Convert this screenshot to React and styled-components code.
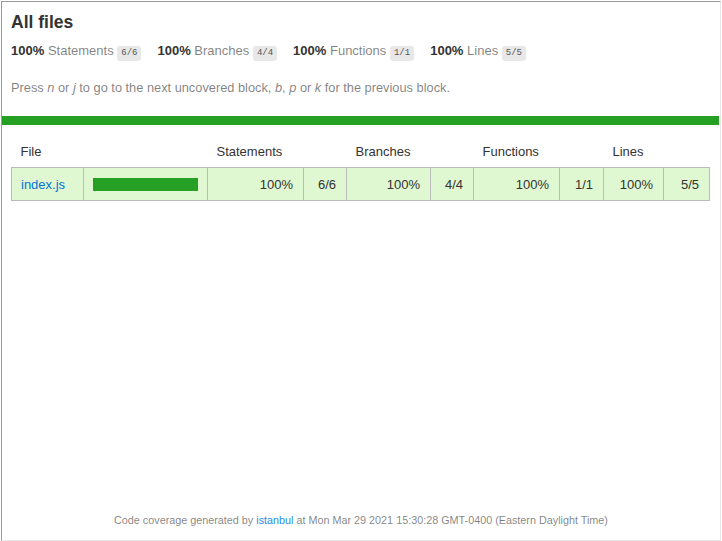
import styled, { createGlobalStyle } from "styled-components";

const GlobalStyle = createGlobalStyle`
  html, body {
    margin: 0;
    padding: 0;
    background: #fff;
  }
  body {
    font-family: "Liberation Sans", Arial, sans-serif;
    font-size: 13px;
    color: #333;
  }
`;

const Frame = styled.div`
  box-sizing: border-box;
  width: 720px;
  height: 540px;
  margin: 1px 0 0 1px;
  border: 1px solid;
  border-color: #9a9a9a #e8e8e8 #e8e8e8 #9a9a9a;
  display: flex;
  flex-direction: column;
`;

const Header = styled.div`
  padding: 10px 10px 20px 9px;
`;

const Title = styled.h1`
  margin: 0;
  font-size: 17.5px;
  line-height: 21px;
  font-weight: bold;
  color: #333;
`;

const Stats = styled.div`
  display: flex;
  gap: 16px;
  margin-top: 10px;
  line-height: 16px;
`;

const Stat = styled.div`
  white-space: nowrap;
`;

const Strong = styled.span`
  font-weight: bold;
  color: #333;
`;

const Quiet = styled.span`
  color: rgba(0, 0, 0, 0.5);
`;

const Fraction = styled.span`
  display: inline-block;
  font-family: "Liberation Mono", "Courier New", monospace;
  font-size: 9px;
  line-height: 11px;
  color: #555;
  background: #e8e8e8;
  padding: 2px 4px;
  border-radius: 3px;
`;

const Hint = styled.p`
  margin: 19px 0 0;
  font-size: 12.8px;
  line-height: 16px;
  color: rgba(0, 0, 0, 0.5);
`;

const StatusLine = styled.div`
  height: 9px;
  margin-right: 1px;
  background: #25a024;
`;

const TableWrap = styled.div`
  padding: 8px 10px 0 9px;
`;

const Table = styled.table`
  width: 698px;
  table-layout: fixed;
  border-collapse: collapse;
  font-size: 13px;
`;

const Th = styled.th`
  text-align: left;
  font-weight: normal;
  white-space: nowrap;
  padding: 12px 9px 8px;
  line-height: 14px;
  color: #333;
`;

const Body = styled.tbody`
  border: 1px solid #bbb;
`;

const Row = styled.tr`
  background: ${(p) => (p.$level === "high" ? "#e0f8d1" : "#fff")};
  border-bottom: 1px solid #bbb;
`;

const Td = styled.td`
  padding: 10px 10px 9px 9px;
  line-height: 13px;
  border-right: 1px solid #bbb;
  text-align: ${(p) => (p.$right ? "right" : "left")};
  white-space: nowrap;
  color: #333;
  &:last-child {
    border-right: none;
  }
`;

const FileLink = styled.a`
  color: #0074d9;
  text-decoration: none;
`;

const Chart = styled.div`
  width: 105px;
  height: 13px;
  line-height: 0;
  background: #25a024;
`;

const Footer = styled.div`
  margin-top: auto;
  padding-bottom: 13px;
  text-align: center;
  font-size: 10.8px;
  line-height: 14px;
  color: rgba(0, 0, 0, 0.5);
`;

const FooterLink = styled.a`
  color: #2b8be6;
  text-decoration: none;
`;

const summary = [
  { label: "Statements", pct: "100%", frac: "6/6" },
  { label: "Branches", pct: "100%", frac: "4/4" },
  { label: "Functions", pct: "100%", frac: "1/1" },
  { label: "Lines", pct: "100%", frac: "5/5" },
];

const colWidths = [72, 124, 96, 43, 84, 43, 86, 44, 60, 46];

export default function App() {
  return (
    <>
      <GlobalStyle />
      <Frame>
        <Header>
          <Title>All files</Title>
          <Stats>
            {summary.map((s) => (
              <Stat key={s.label}>
                <Strong>{s.pct}</Strong> <Quiet>{s.label}</Quiet>{" "}
                <Fraction>{s.frac}</Fraction>
              </Stat>
            ))}
          </Stats>
          <Hint>
            Press <em>n</em> or <em>j</em> to go to the next uncovered block,{" "}
            <em>b</em>, <em>p</em> or <em>k</em> for the previous block.
          </Hint>
        </Header>
        <StatusLine />
        <TableWrap>
          <Table>
            <colgroup>
              {colWidths.map((w, i) => (
                <col key={i} style={{ width: w }} />
              ))}
            </colgroup>
            <thead>
              <tr>
                <Th>File</Th>
                <Th></Th>
                <Th>Statements</Th>
                <Th></Th>
                <Th>Branches</Th>
                <Th></Th>
                <Th>Functions</Th>
                <Th></Th>
                <Th>Lines</Th>
                <Th></Th>
              </tr>
            </thead>
            <Body>
              <Row $level="high">
                <Td>
                  <FileLink href="#">index.js</FileLink>
                </Td>
                <Td>
                  <Chart />
                </Td>
                <Td $right>100%</Td>
                <Td $right>6/6</Td>
                <Td $right>100%</Td>
                <Td $right>4/4</Td>
                <Td $right>100%</Td>
                <Td $right>1/1</Td>
                <Td $right>100%</Td>
                <Td $right>5/5</Td>
              </Row>
            </Body>
          </Table>
        </TableWrap>
        <Footer>
          Code coverage generated by{" "}
          <FooterLink href="#">istanbul</FooterLink> at Mon Mar 29 2021 15:30:28
          GMT-0400 (Eastern Daylight Time)
        </Footer>
      </Frame>
    </>
  );
}
